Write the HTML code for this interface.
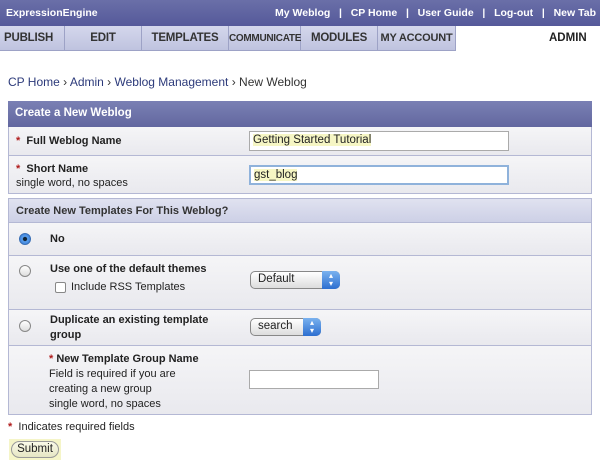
<!DOCTYPE html>
<html><head><style>
*{margin:0;padding:0;box-sizing:border-box}
body{width:600px;height:464px;background:#fff;font-family:"Liberation Sans",sans-serif;font-size:11px;color:#222;position:relative;overflow:hidden}
.a{position:absolute;white-space:nowrap}
.top{left:0;top:0;width:600px;height:26px;background:linear-gradient(#6a6fa8,#55599a);color:#fff;font-weight:bold;font-size:10.5px}
.tab{top:26px;height:25px;background:linear-gradient(#d4d7ec,#bfc3df);border-right:1px solid #9da2c6;border-bottom:1px solid #9da2c6;font-weight:bold;font-size:11.5px;color:#333;text-align:center;line-height:25px;letter-spacing:-0.2px}
.row{left:8px;width:584px;background:linear-gradient(#f5f5f7,#e9e9ee);border:1px solid #b4b8d4;border-top:none}
.b{font-weight:bold}
.r{color:#b01c1c;font-weight:bold}
.inp{background:#fff;border:1px solid #aaa;height:20px;font-size:11.5px;padding:2px 3px}
.rad{width:12px;height:12px;border-radius:50%;border:1px solid #888;background:linear-gradient(#fff,#ddd)}
.sel{height:18px;border:1px solid #888;border-radius:5px;background:linear-gradient(#fff,#ddd);font-size:11.5px;padding:1px 7px}
.arr{right:-1px;top:-1px;width:18px;height:18px;border-radius:0 5px 5px 0;background:linear-gradient(#7ab2ef,#2d6fd0);color:#fff;font-size:8px;text-align:center;line-height:8px;padding-top:1px}
</style></head><body>
<div class="a top"><span class="a" style="left:6px;top:7px">ExpressionEngine</span>
<span class="a" style="left:241px;top:7px;width:355px;text-align:right">My Weblog &nbsp;&nbsp;| &nbsp;&nbsp;CP Home &nbsp;&nbsp;| &nbsp;&nbsp;User Guide &nbsp;&nbsp;| &nbsp;&nbsp;Log-out &nbsp;&nbsp;| &nbsp;&nbsp;New Tab</span></div>
<div class="a tab" style="left:0;width:65px;text-align:left;padding-left:4px">PUBLISH</div>
<div class="a tab" style="left:65px;width:77px">EDIT</div>
<div class="a tab" style="left:142px;width:87px">TEMPLATES</div>
<div class="a tab" style="left:229px;width:72px;font-size:10px;letter-spacing:-0.3px">COMMUNICATE</div>
<div class="a tab" style="left:301px;width:77px">MODULES</div>
<div class="a tab" style="left:378px;width:78px;font-size:11px">MY ACCOUNT</div>
<div class="a" style="left:456px;top:26px;width:144px;height:25px;line-height:25px;font-weight:bold;font-size:11.5px;padding-left:93px">ADMIN</div>
<div class="a" style="left:8px;top:75px;font-size:12px;color:#333"><span style="color:#2c3a7a">CP Home</span> › <span style="color:#2c3a7a">Admin</span> › <span style="color:#2c3a7a">Weblog Management</span> › New Weblog</div>

<div class="a" style="left:8px;top:101px;width:584px;height:26px;background:linear-gradient(#7a80b4,#62679f);color:#fff;font-weight:bold;font-size:11.5px;padding:6px 7px">Create a New Weblog</div>
<div class="a row" style="top:127px;height:29px"><span class="a" style="left:7px;top:8px"><span class="r">*</span>&nbsp; <span class="b">Full Weblog Name</span></span>
<div class="a inp" style="left:240px;top:4px;width:260px"><span style="background:#f6f6c4">Getting Started Tutorial</span></div></div>
<div class="a row" style="top:156px;height:38px"><span class="a" style="left:7px;top:6px;line-height:14px"><span class="r">*</span>&nbsp; <span class="b">Short Name</span><br>single word, no spaces</span>
<div class="a inp" style="left:240px;top:9px;width:260px;border:2px solid #8fb2db"><span style="background:#f6f6c4">gst_blog</span></div></div>
<div class="a" style="left:8px;top:198px;width:584px;height:25px;background:linear-gradient(#e0e2f0,#cdd0e6);border:1px solid #b4b8d4;font-weight:bold;color:#333;padding:6px 7px">Create New Templates For This Weblog?</div>
<div class="a row" style="top:223px;height:33px"><div class="a rad" style="left:10px;top:10px;background:radial-gradient(#123 25%,#5aa0ee 35%,#2c6fcf);border-color:#3a6fb5"></div><span class="a b" style="left:41px;top:10px">No</span></div>
<div class="a row" style="top:256px;height:54px"><div class="a rad" style="left:10px;top:9px"></div><span class="a b" style="left:41px;top:7px">Use one of the default themes</span>
<div class="a" style="left:46px;top:26px;width:11px;height:11px;border:1px solid #888;border-radius:2px;background:#fff"></div><span class="a" style="left:62px;top:25px">Include RSS Templates</span>
<div class="a sel" style="left:241px;top:15px;width:90px">Default<div class="a arr">▴<br>▾</div></div></div>
<div class="a row" style="top:310px;height:36px"><div class="a rad" style="left:10px;top:10px"></div><span class="a b" style="left:41px;top:3px;line-height:15px">Duplicate an existing template<br>group</span>
<div class="a sel" style="left:241px;top:8px;width:71px">search<div class="a arr">▴<br>▾</div></div></div>
<div class="a row" style="top:346px;height:69px"><span class="a" style="left:40px;top:6px;line-height:15px"><span class="r">*</span> <span class="b">New Template Group Name</span><br>Field is required if you are<br>creating a new group<br>single word, no spaces</span>
<div class="a inp" style="left:240px;top:24px;width:130px;height:19px"></div></div>
<div class="a" style="left:8px;top:421px"><span class="r">*</span>&nbsp; Indicates required fields</div>
<div class="a" style="left:9px;top:439px;width:52px;height:21px;background:#f5f5c8;padding:2px"><div style="height:17px;border:1px solid #999;border-radius:9px;background:linear-gradient(#fafae8,#e6e6c4);text-align:center;font-size:11.5px;line-height:15px">Submit</div></div>
</body></html>
